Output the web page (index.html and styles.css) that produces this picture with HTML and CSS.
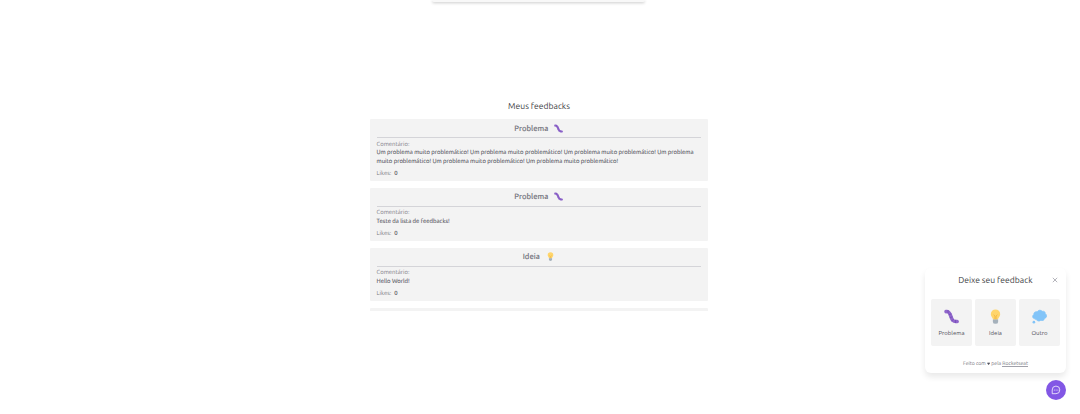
FILE: index.html
```
<!DOCTYPE html>
<html lang="pt-BR">
<head>
<meta charset="utf-8">
<title>Meus feedbacks</title>
<link rel="stylesheet" href="styles.css">
</head>
<body>
<svg class="defs" aria-hidden="true">
  <symbol id="bug" viewBox="0 0 16 16">
    <path d="M2.200 2.800C5.500 2.200 6 4.500 7.200 7.500C8.500 11.500 9.500 13.900 14 13.300" fill="none" stroke="#8f66cb" stroke-width="3.800" stroke-linecap="round" stroke-linejoin="round"/>
    <path d="M4.300 1.200v3.500M8 5l-3 1.200M9 8.300l-3 1M10.300 11l-2.300 1.800M12.200 11.500V15" fill="none" stroke="#6f45b3" stroke-width=".7"/>
  </symbol>
  <symbol id="idea" viewBox="0 0 16 16">
    <path d="M8 .5a5 5 0 0 0-5 5c0 2.600 2 3.200 2.500 6h5c.5-2.800 2.500-3.400 2.500-6a5 5 0 0 0-5-5z" fill="#ffd56b"/>
    <path d="M6 6l1.400 1.500V11M10 6L8.600 7.500V11" fill="none" stroke="#f0b13c" stroke-width=".8"/>
    <path d="M5.200 11.300h5.600v2.500q0 2-2.800 2t-2.800-2z" fill="#a5b1bb"/>
  </symbol>
  <symbol id="thought" viewBox="0 0 16 16">
    <path d="M3.300 10.500C.5 10.500-.2 7 2 6C1.500 3.500 4 2.300 5.500 3C6.500 .8 10 .8 10.800 2.500C13 1.800 14.500 3.500 14 5C16.500 6 16 9.500 13.500 9.800C13.200 12 11 13 9.500 11.900C8 13.500 5.500 13 5 11.500C4.500 11.700 3.700 11.400 3.300 10.500z" fill="#82c4f8" stroke="#82c4f8" stroke-width=".8"/>
    <circle cx="2" cy="14" r="1.400" fill="#82c4f8"/>
  </symbol>
</svg>
<main class="page">
  <div class="panel"></div>
  <h1 class="heading"><span>Meus feedbacks</span></h1>
  <section class="list">
    <article class="card">
      <h2 class="card-title"><span>Problema</span><svg class="card-icon"><use href="#bug"/></svg></h2>
      <p class="label">Comentário:</p>
      <p class="comment">Um problema muito problemático! Um problema muito problemático! Um problema muito problemático! Um problema<br>muito problemático! Um problema muito problemático! Um problema muito problemático!</p>
      <p class="likes">Likes: <b>0</b></p>
    </article>
    <article class="card">
      <h2 class="card-title"><span>Problema</span><svg class="card-icon"><use href="#bug"/></svg></h2>
      <p class="label">Comentário:</p>
      <p class="comment">Teste da lista de feedbacks!</p>
      <p class="likes">Likes: <b>0</b></p>
    </article>
    <article class="card">
      <h2 class="card-title"><span>Ideia</span><svg class="card-icon"><use href="#idea"/></svg></h2>
      <p class="label">Comentário:</p>
      <p class="comment">Hello World!</p>
      <p class="likes">Likes: <b>0</b></p>
    </article>
    <article class="card"></article>
  </section>
</main>
<aside class="widget">
  <div class="popover">
    <header class="popover-head">
      <span class="popover-title">Deixe seu feedback</span>
      <svg class="close" viewBox="0 0 6 6"><path d="M.8.8l4.400 4.400M5.200.8L.8 5.200" stroke="#a1a1aa" stroke-width=".8"/></svg>
    </header>
    <div class="options">
      <button class="option"><svg><use href="#bug"/></svg><span>Problema</span></button>
      <button class="option"><svg><use href="#idea"/></svg><span>Ideia</span></button>
      <button class="option"><svg><use href="#thought"/></svg><span>Outro</span></button>
    </div>
    <footer class="credit">Feito com <svg class="heart" viewBox="0 0 6 6"><path d="M3 5.600L.6 2.800C0 1.300 2 .3 3 1.700C4 .3 6 1.300 5.400 2.800z" fill="#52525b"/></svg> pela <a>Rocketseat</a></footer>
  </div>
  <button class="fab"><svg viewBox="0 0 10 10" fill="none" stroke="#fff" stroke-width=".75"><path d="M1.200 8.700V5A3.800 3.800 0 1 1 5 8.700z" stroke-linejoin="round"/><path d="M2.900 5.100h.8M4.700 5.100h.8M6.500 5.100h.8" stroke-width=".9"/></svg></button>
</aside>
</body>
</html>
```
FILE: styles.css
```
* { box-sizing: border-box; }
body {
  margin: 0;
  height: 414px;
  overflow: hidden;
  background: #fff;
  color: #52525b;
  font-family: Ubuntu, "Noto Sans", sans-serif;
  text-rendering: geometricPrecision;
}
h1, h2, p { margin: 0; font-weight: 400; }
button { border: 0; padding: 0; font: inherit; color: inherit; }
.defs { position: absolute; width: 0; height: 0; }
.page { display: flex; flex-direction: column; align-items: center; padding-right: 2px; }
.panel {
  width: 213px;
  height: 2px;
  margin-right: 1px;
  background: #f8f8f8;
  border-radius: 0 0 3px 3px;
  box-shadow: 0 1px 3px rgba(0, 0, 0, .24);
}
.heading { margin-top: 98px; height: 12px; font-size: 8.550px; line-height: 12px; color: #3f3f46; }
.list {
  display: flex;
  flex-direction: column;
  gap: 7px;
  width: 338px;
  height: 192px;
  margin-top: 7px;
  overflow: hidden;
}
.card { flex: none; height: 53px; padding: 0 7px 0 6.500px; background: #f3f3f3; border-radius: 1px; }
.card:first-child { height: 61.500px; }
.card-title {
  display: flex;
  justify-content: center;
  align-items: center;
  gap: 6px;
  height: 19px;
  border-bottom: 1px solid #d4d4d8;
  font-size: 7.700px;
  line-height: 10px;
  font-weight: 500;
  color: #71717a;
}
.card-title span { padding-top: 1px; -webkit-text-stroke: .08px #71717a; }
.card-icon { width: 9px; height: 9px; }
.label { margin-top: 2.800px; height: 8.500px; font-size: 5.960px; line-height: 8.500px; color: #7c7c85; }
.comment { font-size: 5.965px; line-height: 8.500px; white-space: nowrap; -webkit-text-stroke: .08px #52525b; }
.likes { margin-top: 3.300px; font-size: 5.960px; line-height: 8.500px; color: #7c7c85; }
.likes b { margin-left: 1.700px; font-weight: 500; color: #52525b; }
.widget {
  position: absolute;
  right: 14px;
  bottom: 14px;
  display: flex;
  flex-direction: column;
  align-items: flex-end;
  gap: 7px;
}
.popover {
  width: 141px;
  height: 105px;
  padding: 6px 6px 0;
  border-radius: 6px;
  background: #fff;
  box-shadow: 0 4px 6px rgba(0, 0, 0, .09);
}
.popover-head { display: flex; justify-content: flex-end; align-items: center; height: 12px; }
.popover-title { margin-right: 19px; font-size: 8.550px; color: #3f3f46; white-space: nowrap; }
.close { width: 6px; height: 6px; margin-right: 2.500px; }
.options { display: flex; gap: 3px; margin-top: 13px; }
.option {
  display: flex;
  flex: 1;
  flex-direction: column;
  align-items: center;
  height: 47px;
  padding-top: 10px;
  background: #f3f3f3;
  border-radius: 2px;
}
.option svg { width: 15px; height: 15px; }
.option span { margin-top: 4px; font-size: 6px; line-height: 9px; }
.credit { margin-top: 13px; font-size: 5.150px; line-height: 8px; text-align: center; color: #71717a; white-space: nowrap; }
.heart { width: 3.200px; height: 3.200px; }
.credit a { border-bottom: 1px solid #a1a1aa; }
.fab { display: grid; place-items: center; width: 20px; height: 20px; border-radius: 50%; background: #8257e5; }
.fab svg { width: 10px; height: 10px; }
```
